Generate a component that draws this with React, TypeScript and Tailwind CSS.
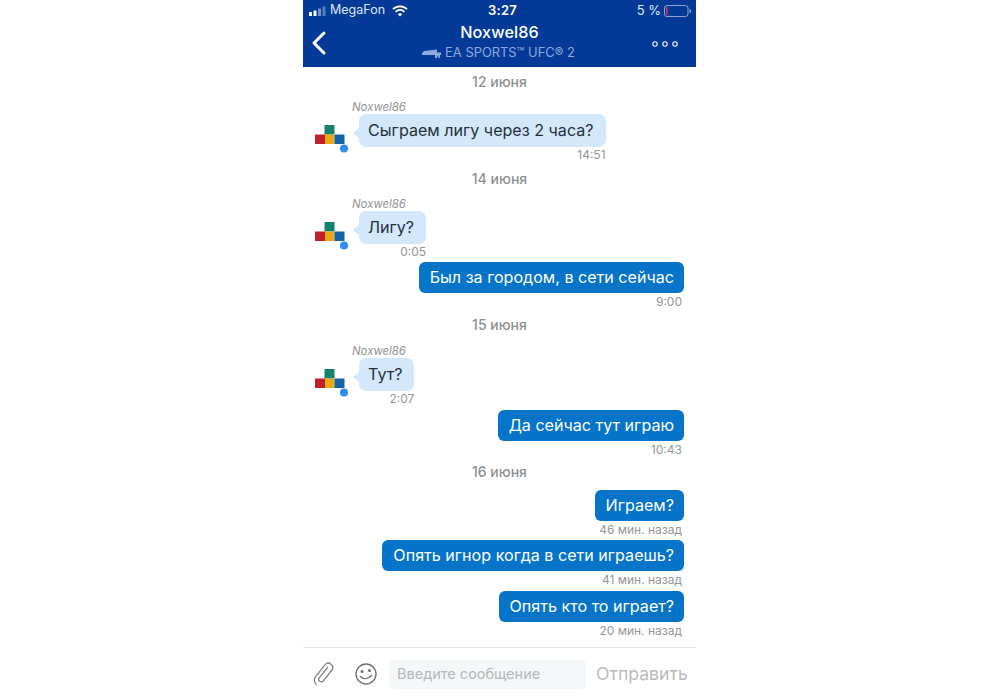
const font = "font-['Inter','Liberation_Sans',sans-serif]";

function DateRow({ text, cls }: { text: string; cls: string }) {
  return <div className={`h-[20px] flex items-center justify-center text-[14px] font-medium text-[#8d8f92] ${cls}`}>{text}</div>;
}

function Avatar() {
  return (
    <svg width="34" height="39" viewBox="0 0 34 39" className="shrink-0">
      <rect x="9.5" y="11" width="10" height="9.5" fill="#16806f" />
      <rect x="0" y="20.5" width="10" height="9.5" fill="#c2202b" />
      <rect x="10" y="20.5" width="9.5" height="9.5" fill="#e8ab17" />
      <rect x="19.5" y="20.5" width="10" height="9.5" fill="#1462a8" />
      <circle cx="29" cy="34.5" r="4" fill="#2b8ef0" />
    </svg>
  );
}

function In({ text, time, cls }: { text: string; time: string; cls: string }) {
  return (
    <div className={`pl-[12px] ${cls}`}>
      <div className="pl-[37px] pt-[2px] h-[14px] flex items-center text-[11.4px] italic text-[#8f9296]">Noxwel86</div>
      <div className="flex items-start">
        <Avatar />
        <div className="flex flex-col items-end ml-[10px]">
          <div className="relative h-[33px] pl-[9px] pr-[12px] rounded-[7px] bg-[#d3e9fb] flex items-center text-[16.1px] text-[#25303c]">
            <span className="absolute left-[-6px] top-[13px] w-0 h-0 border-y-[6px] border-y-transparent border-r-[7px] border-r-[#d3e9fb]" />
            {text}
          </div>
          <div className="h-[14px] pt-[2px] flex items-center text-[12px] text-[#94979b]">{time}</div>
        </div>
      </div>
    </div>
  );
}

function Out({ text, time, cls, gap }: { text: string; time: string; cls: string; gap: string }) {
  return (
    <div className={`flex flex-col items-end pr-[12px] ${cls}`}>
      <div className="h-[31px] pl-[11px] pr-[10px] rounded-[6px] bg-[#0674c9] flex items-center text-[16.1px] text-white">{text}</div>
      <div className={`h-[14px] pr-[2px] flex items-center text-[12px] text-[#94979b] ${gap}`}>{time}</div>
    </div>
  );
}

export default function App() {
  return (
    <div className={`w-[1000px] h-[700px] bg-white overflow-hidden pl-[303px] ${font}`}>
      <div className="w-[393px] h-[700px] flex flex-col">
        <div className="h-[67px] bg-[#043a97] text-white flex flex-col">
          <div className="h-[21px] flex items-center justify-between pl-[6px] pr-[4px] text-[13px] text-[#dfe8f8]">
            <div className="flex items-center w-[120px]">
              <svg width="18" height="10" viewBox="0 0 18 10">
                <rect x="0" y="6" width="3" height="4" rx="0.6" fill="#fff" />
                <rect x="4.5" y="4.5" width="3" height="5.5" rx="0.6" fill="#fff" />
                <rect x="9" y="2.5" width="3" height="7.5" rx="0.6" fill="#fff" fillOpacity="0.45" />
                <rect x="13.5" y="0.5" width="3" height="9.5" rx="0.6" fill="#fff" fillOpacity="0.35" />
              </svg>
              <span className="ml-[3px] text-[12.5px]">MegaFon</span>
              <svg width="16" height="12" viewBox="0 0 16 12" className="ml-[7px]" fill="none" stroke="#fff" strokeWidth="1.8">
                <path d="M1 4.2a10 10 0 0 1 14 0" />
                <path d="M3.6 6.8a6.2 6.2 0 0 1 8.8 0" />
                <path d="M8 11.5 5.8 9.2a3.2 3.2 0 0 1 4.4 0z" fill="#fff" stroke="none" />
              </svg>
            </div>
            <span className="font-semibold text-[13px] tracking-[0.3px] text-white ml-[4px]">3:27</span>
            <div className="flex items-center justify-end w-[120px]">
              <span>5 %</span>
              <svg width="28" height="12" viewBox="0 0 28 12" className="ml-[3px]">
                <rect x="0.5" y="0.5" width="23.5" height="11" rx="2.5" fill="none" stroke="#8ea4cf" />
                <rect x="2" y="2" width="1.6" height="8" fill="#d6345a" />
                <rect x="25.5" y="4" width="1.5" height="4" rx="0.7" fill="#8ea4cf" />
              </svg>
            </div>
          </div>
          <div className="relative flex-1 flex flex-col items-center">
            <div className="h-[23px] flex items-center text-[16.2px] font-medium tracking-[0.1px]">Noxwel86</div>
            <div className="h-[17px] pr-[2px] flex items-center text-[12.9px] text-[#8fa9da]">
              <svg width="19" height="10" viewBox="0 0 19 10" className="mr-[4px]" fill="#8fa9da">
                <path d="M2 3 15 1.5v3H19V7H0V5z" />
                <path d="M13 7h5v3h-1.5V8.5H15V10h-2z" />
              </svg>
              EA SPORTS™ UFC® 2
            </div>
            <svg width="16" height="26" viewBox="0 0 16 26" className="absolute left-[8px] top-[9px]" fill="none" stroke="#fff" strokeWidth="3" strokeLinecap="round" strokeLinejoin="round">
              <path d="M13 3 3 13l10 10" />
            </svg>
            <svg width="26" height="6" viewBox="0 0 26 6" className="absolute right-[18px] top-[20px]" fill="none" stroke="#fff" strokeWidth="1.1">
              <circle cx="3" cy="3" r="2.2" />
              <circle cx="13" cy="3" r="2.2" />
              <circle cx="23" cy="3" r="2.2" />
            </svg>
          </div>
        </div>

        <div className="flex-1 flex flex-col">
          <DateRow text="12 июня" cls="mt-[4px]" />
          <In text="Сыграем лигу через 2 часа?" time="14:51" cls="mt-[9px]" />
          <DateRow text="14 июня" cls="mt-[7px]" />
          <In text="Лигу?" time="0:05" cls="mt-[9px]" />
          <Out text="Был за городом, в сети сейчас" time="9:00" cls="mt-[4px]" gap="pt-[3px]" />
          <DateRow text="15 июня" cls="mt-[7px]" />
          <In text="Тут?" time="2:07" cls="mt-[10px]" />
          <Out text="Да сейчас тут играю" time="10:43" cls="mt-[5px]" gap="pt-[3px]" />
          <DateRow text="16 июня" cls="mt-[6px]" />
          <Out text="Играем?" time="46 мин. назад" cls="mt-[9px]" gap="mt-[1px] pt-[2px]" />
          <Out text="Опять игнор когда в сети играешь?" time="41 мин. назад" cls="mt-[4px]" gap="mt-[1px] pt-[2px]" />
          <Out text="Опять кто то играет?" time="20 мин. назад" cls="mt-[5px]" gap="mt-[1px] pt-[2px]" />
        </div>

        <div className="h-[53px] border-t border-[#e3e4e6] flex items-center">
          <svg width="24" height="26" viewBox="0 0 24 26" className="ml-[9px]" fill="none" stroke="#7f8285" strokeWidth="1.3" strokeLinecap="round">
            <path d="M15.5 6.5 7 17a2.6 2.6 0 0 0 4 3.2l9-11.2a4.4 4.4 0 0 0-6.9-5.4L3.4 15.8a6.3 6.3 0 0 0 .9 7.6" />
          </svg>
          <svg width="24" height="24" viewBox="0 0 24 24" className="ml-[18px]" fill="none" stroke="#707376" strokeWidth="1.4" strokeLinecap="round">
            <circle cx="12" cy="12" r="10" />
            <circle cx="8" cy="9.5" r="1.5" fill="#707376" stroke="none" />
            <circle cx="15.5" cy="8.5" r="1.5" fill="#707376" stroke="none" />
            <path d="M6.5 14.5c2.5 3 7.5 3 11-1" />
          </svg>
          <div className="ml-[11px] w-[197px] h-[29px] rounded-[5px] bg-[#f3f7f8] flex items-center pl-[8px] text-[14.5px] text-[#b5b8bb]">Введите сообщение</div>
          <div className="ml-[10px] text-[17.6px] text-[#b8babc]">Отправить</div>
        </div>
      </div>
    </div>
  );
}
